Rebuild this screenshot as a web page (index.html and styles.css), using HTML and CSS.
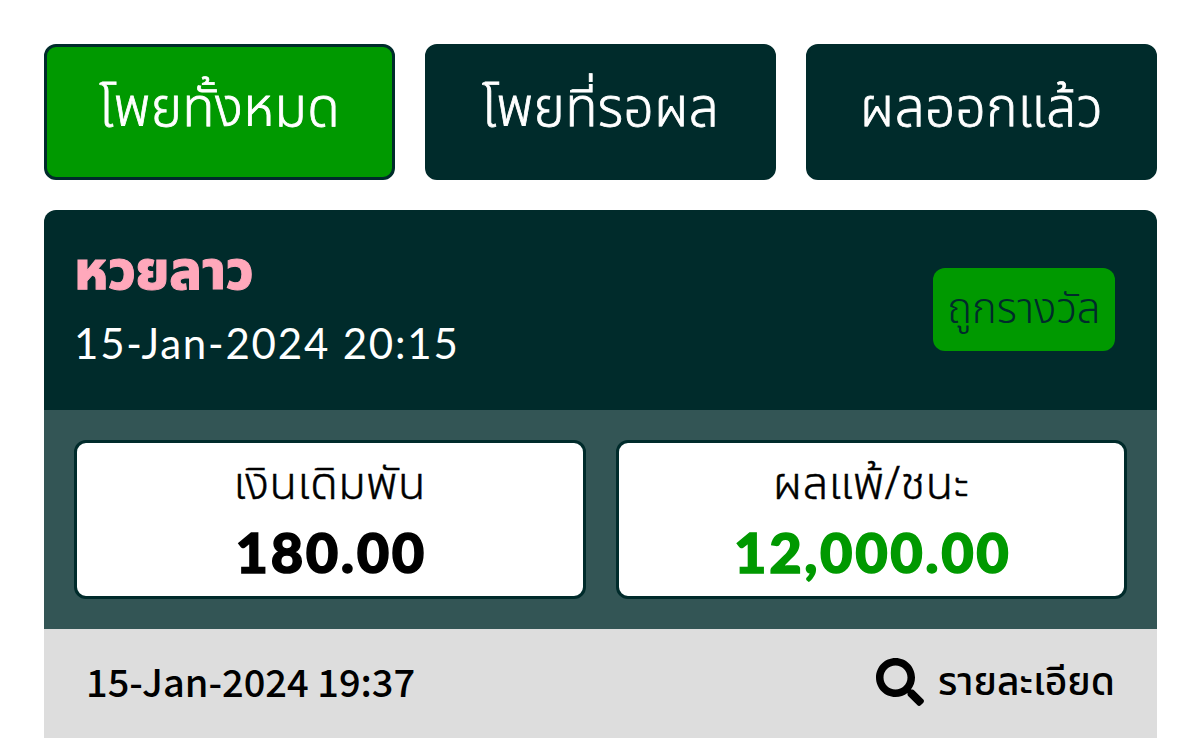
FILE: index.html
```html
<!DOCTYPE html>
<html lang="th">
<head>
<meta charset="utf-8">
<title>โพย</title>
<link rel="stylesheet" href="styles.css">
</head>
<body>
<nav class="tabs">
  <button class="tab active">โพยทั้งหมด</button>
  <button class="tab">โพยที่รอผล</button>
  <button class="tab">ผลออกแล้ว</button>
</nav>
<article class="card">
  <header class="head">
    <div>
      <h2 class="name">หวยลาว</h2>
      <div class="draw">15-Jan-2024 20:15</div>
    </div>
    <div class="badge">ถูกรางวัล</div>
  </header>
  <section class="stats">
    <div class="stat"><div class="label">เงินเดิมพัน</div><div class="value">180.00</div></div>
    <div class="stat"><div class="label">ผลแพ้/ชนะ</div><div class="value win">12,000.00</div></div>
  </section>
  <footer class="foot">
    <span class="time">15-Jan-2024 19:37</span>
    <a class="detail"><svg class="icon" viewBox="0 0 512 512"><path d="M505 442.700 405.300 343c-4.500-4.500-10.600-7-17-7H372c27.600-35.300 44-79.700 44-128C416 93.100 322.900 0 208 0S0 93.100 0 208s93.100 208 208 208c48.300 0 92.700-16.400 128-44v16.300c0 6.400 2.500 12.500 7 17l99.700 99.700c9.400 9.400 24.600 9.400 33.900 0l28.300-28.300c9.400-9.400 9.400-24.600.1-34zM208 336c-70.700 0-128-57.200-128-128 0-70.700 57.200-128 128-128 70.700 0 128 57.200 128 128 0 70.700-57.200 128-128 128z"/></svg><span>รายละเอียด</span></a>
  </footer>
</article>
</body>
</html>
```
FILE: styles.css
```css
* { box-sizing: border-box; }
body { margin: 0; padding: 44px 43px 0 44px; height: 738px; overflow: hidden; background: #fff; font-family: "Noto Sans Thai", "Noto Sans", sans-serif; }
.tabs { display: flex; gap: 30px; margin-bottom: 30px; }
.tab { flex: 1; height: 136px; border: 3px solid #002b2b; border-radius: 12px; background: #002b2b; color: #fff; font: 300 53px "Noto Sans Thai", "Noto Sans", sans-serif; letter-spacing: 0.4px; -webkit-text-stroke: 0.8px currentColor; padding: 0 0 4px; white-space: nowrap; }
.active { background: #009900; }
.card { border-radius: 12px 12px 0 0; overflow: hidden; }
.head { height: 200px; background: #002b2b; display: flex; justify-content: space-between; align-items: center; padding: 0 42px 10px 30px; }
.name { margin: 0; color: #ffa8bb; font-size: 54px; font-weight: 800; line-height: 76px; letter-spacing: -0.3px; -webkit-text-stroke: 1px currentColor; }
.draw { color: #fff; font-family: Lato, sans-serif; font-size: 42px; line-height: 64px; letter-spacing: 1.8px; white-space: nowrap; }
.badge { width: 182px; height: 83px; margin-top: 9px; border-radius: 12px; background: #009900; color: #002b2b; display: flex; align-items: center; justify-content: center; font-size: 42px; font-weight: 300; white-space: nowrap; }
.stats { height: 219px; padding: 30px; display: flex; gap: 30px; background: #335555; }
.stat { flex: 1; border: 3px solid #002b2b; border-radius: 12px; background: #fff; text-align: center; }
.label { padding-top: 2px; font-size: 45px; line-height: 80px; font-weight: 300; letter-spacing: 0.6px; -webkit-text-stroke: 0.5px currentColor; }
.value { font-family: Lato, sans-serif; font-size: 56px; line-height: 54px; font-weight: 900; letter-spacing: 2.6px; padding-left: 3px; -webkit-text-stroke: 1.5px currentColor; }
.win { color: #009900; }
.foot { height: 109px; background: #ddd; display: flex; align-items: center; justify-content: space-between; padding: 0 42px 3px 42px; font-size: 39px; font-weight: 500; white-space: nowrap; }
.time { font-family: "Noto Sans CJK JP", sans-serif; font-size: 38px; margin-top: -4px; }
.detail { display: flex; align-items: center; gap: 14px; }
.detail span { padding-top: 3px; }
.icon { width: 48px; height: 48px; }
```
